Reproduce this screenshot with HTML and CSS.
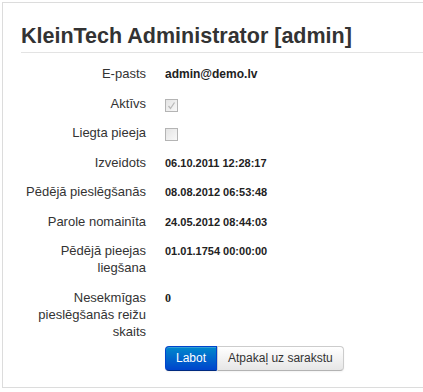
FILE: index.html
```html
<!DOCTYPE html>
<html lang="lv">
<head>
    <meta charset="UTF-8">
    <title>KleinTech Administrator</title>
    <link rel="stylesheet" href="styles.css">
</head>
<body>
<div class="panel">
    <h1 class="title">KleinTech Administrator [admin]</h1>
    <dl class="details">
        <dt>E-pasts</dt>
        <dd class="mail">admin@demo.lv</dd>

        <dt>Aktīvs</dt>
        <dd>
            <span class="check">
                <svg width="11" height="11" viewBox="0 0 11 11"><path d="M2.5 6 L4.5 8.5 L8.5 2.5" fill="none" stroke="#b9b9b9" stroke-width="1.3"/></svg>
            </span>
        </dd>

        <dt>Liegta pieeja</dt>
        <dd><span class="check"></span></dd>

        <dt>Izveidots</dt>
        <dd>06.10.2011 12:28:17</dd>

        <dt>Pēdējā pieslēgšanās</dt>
        <dd>08.08.2012 06:53:48</dd>

        <dt>Parole nomainīta</dt>
        <dd>24.05.2012 08:44:03</dd>

        <dt>Pēdējā pieejas liegšana</dt>
        <dd>01.01.1754 00:00:00</dd>

        <dt>Nesekmīgas pieslēgšanās reižu skaits</dt>
        <dd class="num">0</dd>
    </dl>
    <div class="actions">
        <a class="btn btn-primary" href="#">Labot</a><a class="btn" href="#">Atpakaļ uz sarakstu</a>
    </div>
</div>
</body>
</html>
```

FILE: styles.css
```css
body{
    margin: 0;
    font-family: "Liberation Sans", Arial, Helvetica, sans-serif;
    color: #333;
    background: #fff;
}

.panel{
    margin: 2px 0 0 2px;
    border: 1px solid #dcdcdc;
    border-right: none;
    padding: 0 0 16px 18px;
}

.title{
    margin: 0 0 12px;
    padding: 20px 0 3px;
    font-size: 21.5px;
    line-height: 26px;
    font-weight: bold;
    color: #333;
    border-bottom: 1px solid #e3e3e3;
}

.details{
    margin: 0;
    display: grid;
    grid-template-columns: 125px auto;
    column-gap: 19px;
    row-gap: 12.5px;
    align-items: baseline;
    font-size: 13px;
    line-height: 17px;
}
.details dt{
    text-align: right;
    color: #333;
}
.details dd{
    margin: 0;
    font-size: 11px;
    line-height: 14px;
    font-weight: bold;
    color: #222;
}
.details .mail{
    font-size: 12px;
}
.details .num{
    font-family: "Liberation Serif", "Times New Roman", serif;
    font-size: 12px;
}

.check{
    display: inline-block;
    width: 11px;
    height: 11px;
    border: 1px solid #b4b4b4;
    background: linear-gradient(135deg, #e4e4e4, #f8f8f8);
    vertical-align: -4px;
}
.check svg{
    display: block;
}

.actions{
    margin: 6px 0 0 144px;
    display: flex;
}
.btn{
    display: inline-block;
    padding: 4px 10px;
    font-size: 12px;
    line-height: 15px;
    color: #333;
    text-decoration: none;
    background: linear-gradient(#ffffff, #e6e6e6);
    border: 1px solid #cccccc;
    border-bottom-color: #b3b3b3;
    border-radius: 0 4px 4px 0;
    box-shadow: inset 0 1px 0 rgba(255,255,255,.2), 0 1px 2px rgba(0,0,0,.05);
}
.btn-primary{
    color: #fff;
    background: linear-gradient(#0088cc, #0044cc);
    border-color: #0044cc #0044cc #002a80;
    border-radius: 4px 0 0 4px;
}
```
